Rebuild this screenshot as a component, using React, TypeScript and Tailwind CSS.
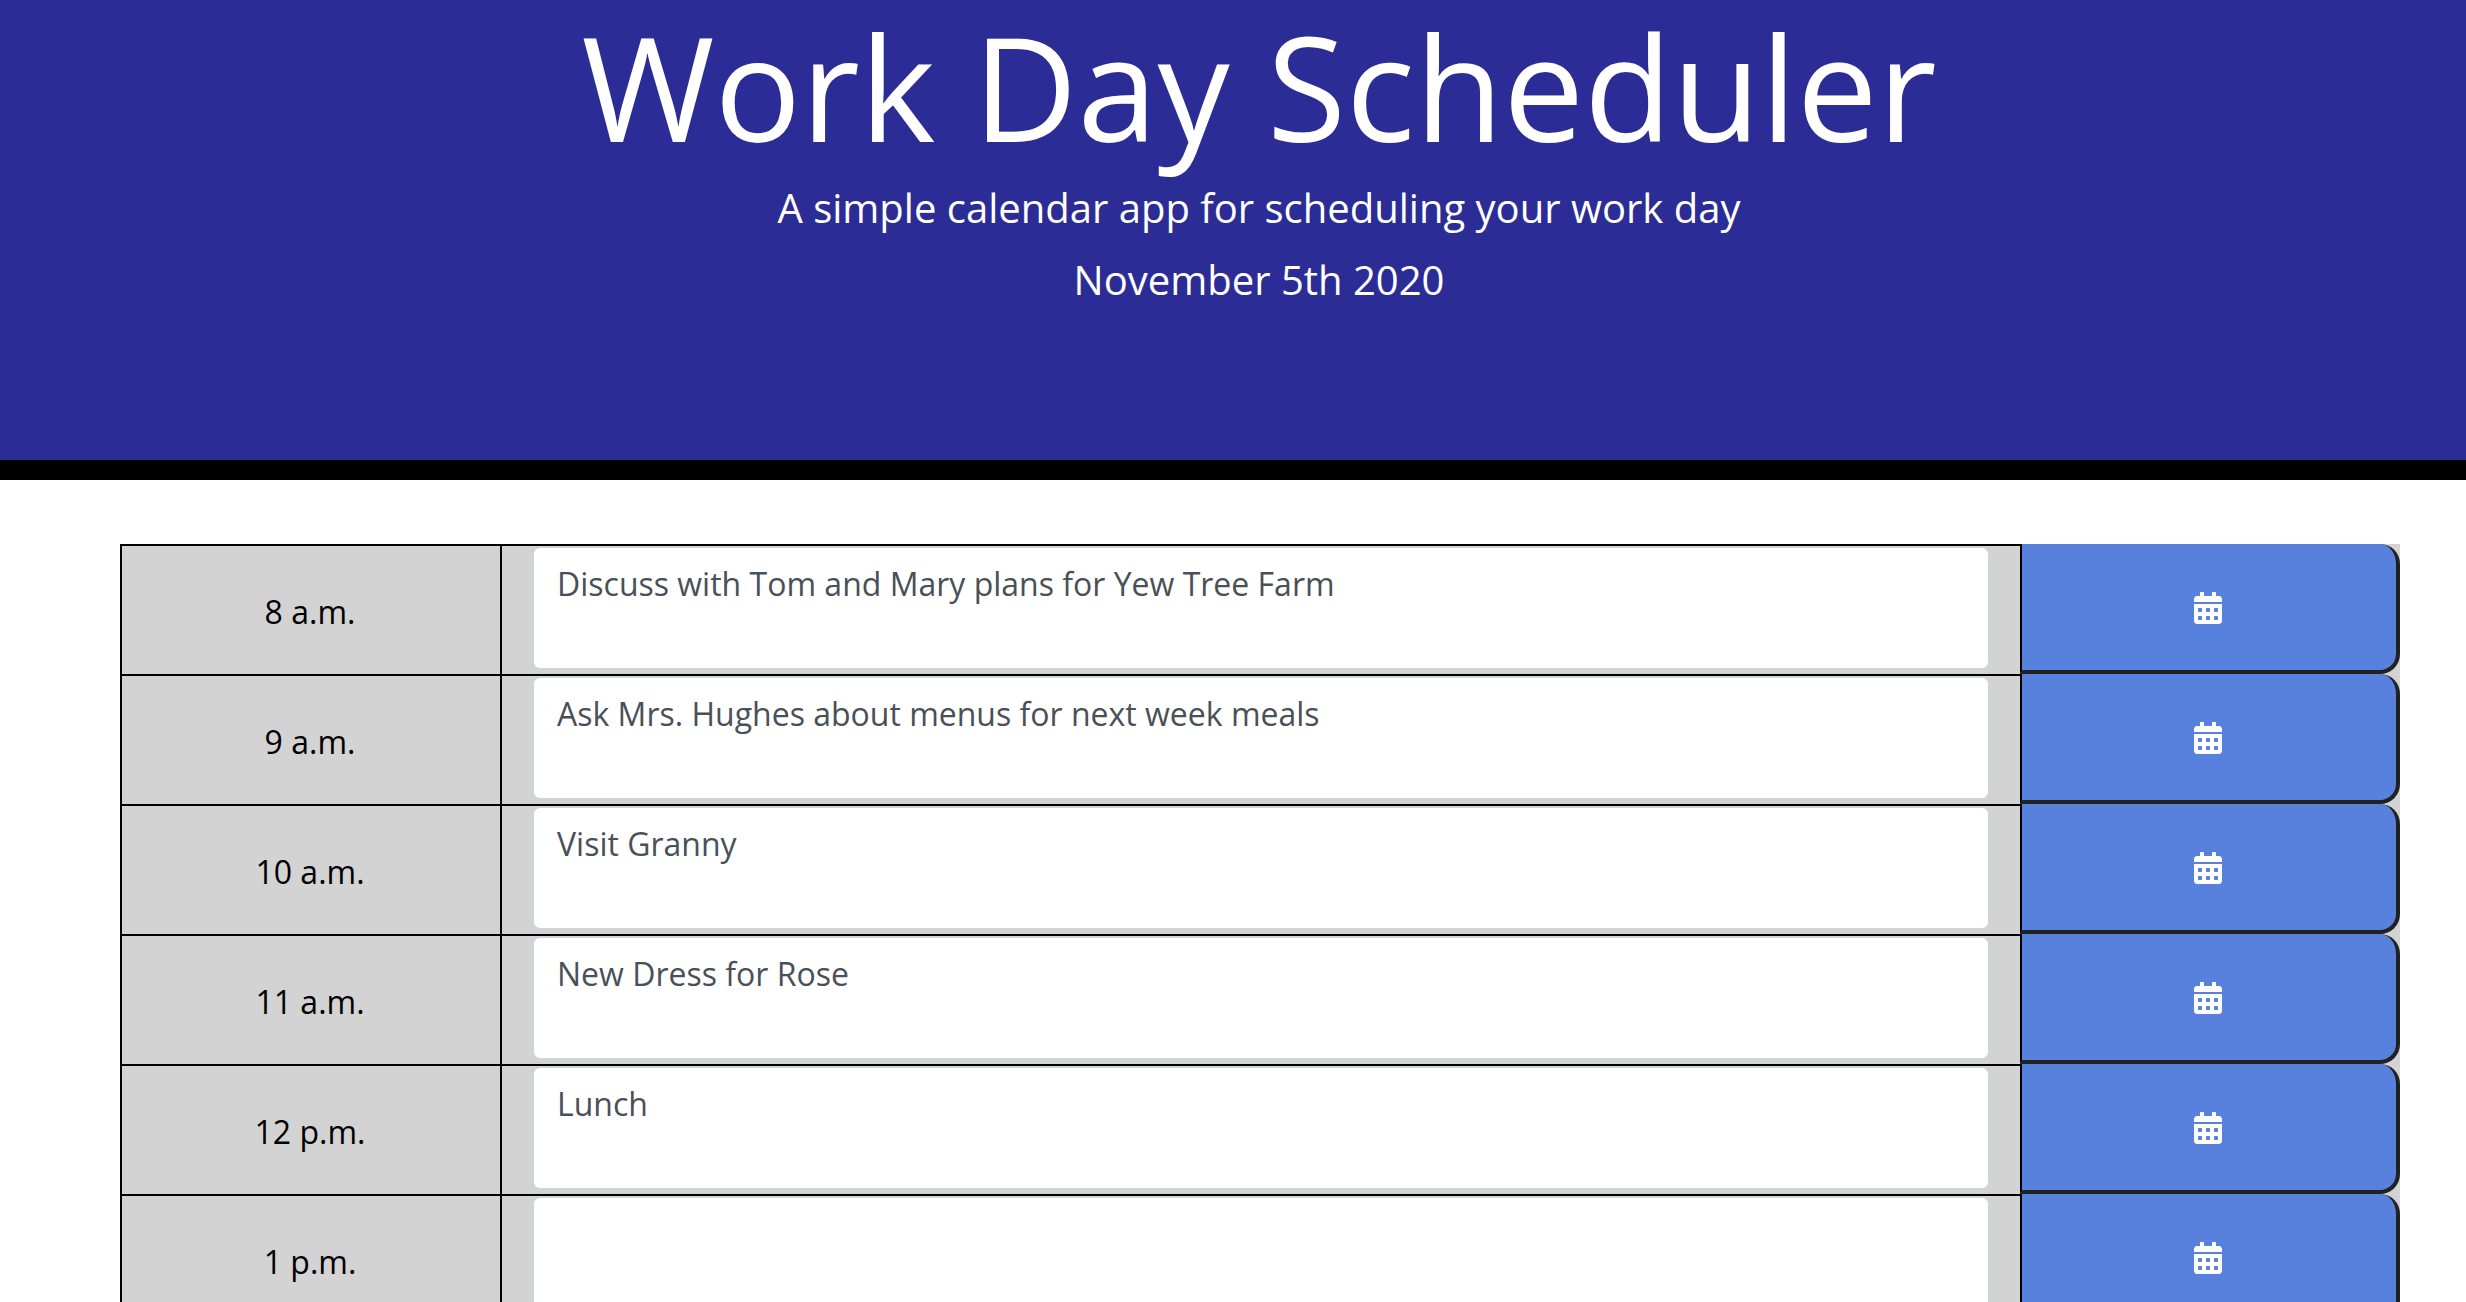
import { useState } from "react";
import { FaCalendarAlt } from "react-icons/fa";

const hours = [
  { label: "8 a.m.", plan: "Discuss with Tom and Mary plans for Yew Tree Farm" },
  { label: "9 a.m.", plan: "Ask Mrs. Hughes about menus for next week meals" },
  { label: "10 a.m.", plan: "Visit Granny" },
  { label: "11 a.m.", plan: "New Dress for Rose" },
  { label: "12 p.m.", plan: "Lunch" },
  { label: "1 p.m.", plan: "" },
];

function TimeBlock({ id, label, plan }: { id: string; label: string; plan: string }) {
  const [text, setText] = useState(plan);
  return (
    <div className="grid h-[130px] shrink-0 grid-cols-12 bg-[#d3d3d3]">
      <label
        htmlFor={id}
        className="col-span-2 flex items-center justify-center border-t-2 border-l-2 border-black pt-1 pr-0.5 text-[32px] leading-[48px] text-black"
      >
        {label}
      </label>
      <div className="col-span-8 border-t-2 border-l-2 border-black px-[30px]">
        <textarea
          id={id}
          value={text}
          onChange={(e) => setText(e.target.value)}
          className="block h-[124px] w-full resize-none rounded-lg border-2 border-[#ced4da] bg-white px-[23px] py-3 text-[32px] leading-[48px] text-[#495057] outline-none"
        />
      </div>
      <button
        type="button"
        aria-label={`Save ${label}`}
        className="col-span-2 flex items-center justify-center rounded-r-[20px] border-r-4 border-b-4 border-l-2 border-[#212121] border-l-black bg-[#5781dd] pt-0.5 pr-0.5 text-[32px] text-white"
      >
        <FaCalendarAlt />
      </button>
    </div>
  );
}

export default function App() {
  return (
    <div className="flex h-screen flex-col overflow-hidden bg-white font-['Open_Sans',sans-serif]">
      <header className="h-[480px] shrink-0 border-b-[20px] border-black bg-[#2b2c95] pr-[68px] pl-[120px] text-center text-white">
        <h1 className="text-[144px] leading-[172px]">Work Day Scheduler</h1>
        <p className="mt-1.5 text-[40px] leading-[60px]">
          A simple calendar app for scheduling your work day
        </p>
        <p className="mt-3 text-[40px] leading-[60px]">November 5th 2020</p>
      </header>
      <main className="mt-16 flex flex-col pr-[66px] pl-[120px]">
        {hours.map((h, i) => (
          <TimeBlock key={h.label} id={`hour-${i}`} label={h.label} plan={h.plan} />
        ))}
      </main>
    </div>
  );
}
